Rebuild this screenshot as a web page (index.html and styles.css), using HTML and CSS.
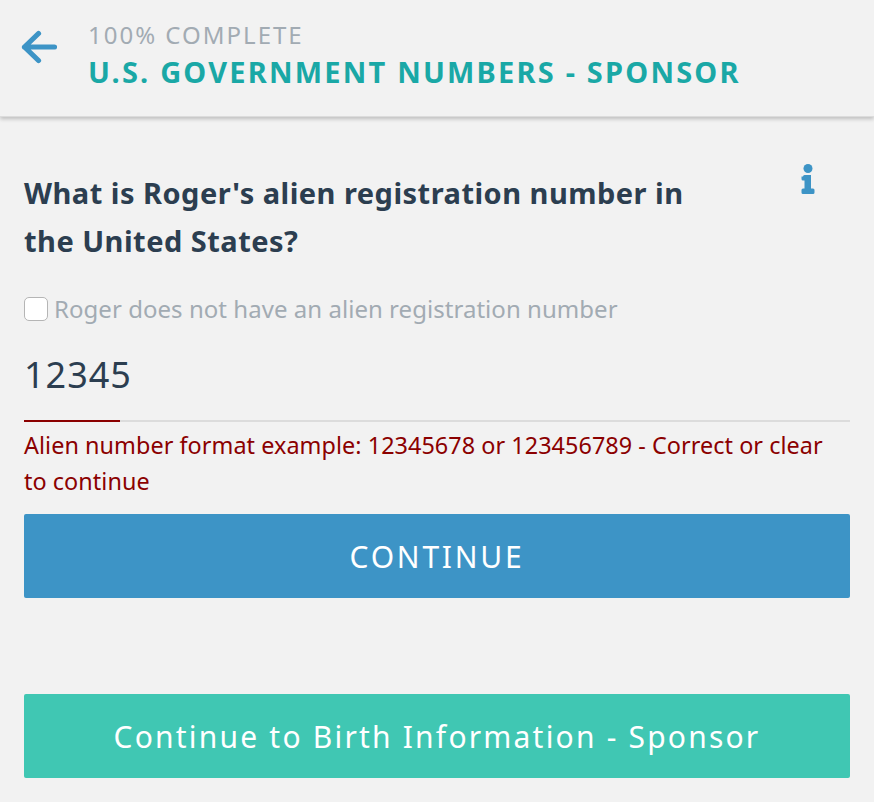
FILE: index.html
```html
<!DOCTYPE html>
<html lang="en">
<head>
<meta charset="utf-8">
<title>U.S. Government Numbers - Sponsor</title>
<link rel="stylesheet" href="styles.css">
</head>
<body>
<header class="top">
  <svg class="back" width="36" height="34" viewBox="0 0 36 34" aria-hidden="true"><path d="M33.500 17H3.500M17.500 3.500 3.500 17l14 13.500" fill="none" stroke="#3d94c6" stroke-width="5.200" stroke-linecap="round" stroke-linejoin="round"/></svg>
  <div class="titles">
    <div class="progress">100% COMPLETE</div>
    <div class="section">U.S. GOVERNMENT NUMBERS - SPONSOR</div>
  </div>
</header>
<main class="main">
  <div class="question-row">
    <h1 class="question">What is Roger's alien registration number in the United States?</h1>
    <svg class="info" width="14" height="32" viewBox="0 0 14 32" aria-hidden="true"><circle cx="7" cy="4.500" r="4.500" fill="#3d94c6"/><path d="M2 12.500Q2 11 3.500 11H10V24.500H12Q13.500 24.500 13.500 26V28.500Q13.500 30 12 30H2Q.5 30 .5 28.500V26Q.5 24.500 2 24.500H3.500V16.500H2Q.5 16.500 .5 15V12.500Z" fill="#3d94c6"/></svg>
  </div>
  <label class="check-row"><input class="check" type="checkbox"><span>Roger does not have an alien registration number</span></label>
  <div class="value">12345</div>
  <div class="rule"><div class="rule-fill"></div></div>
  <p class="error">Alien number format example: 12345678 or 123456789 - Correct or clear to continue</p>
  <button class="btn btn-blue" type="button">CONTINUE</button>
  <button class="btn btn-green" type="button">Continue to Birth Information - Sponsor</button>
</main>
</body>
</html>
```
FILE: styles.css
```css
* { box-sizing: border-box; }
html, body { margin: 0; padding: 0; }
body {
  width: 874px;
  height: 802px;
  overflow: hidden;
  background: #f2f2f2;
  font-family: "Noto Sans", "Open Sans", sans-serif;
}
.top {
  height: 117px;
  display: flex;
  align-items: flex-start;
  padding: 21px 0 0 21px;
  box-shadow: 0 2px 4px rgba(0,0,0,.22);
  border-bottom: 1px solid #dcdcdc;
}
.back { margin-top: 9px; flex: none; }
.titles { margin-left: 31px; }
.progress {
  font-size: 24px;
  line-height: 30px;
  letter-spacing: 2px;
  color: #a2abb3;
  margin-top: -1px;
}
.section {
  margin-top: 6px;
  font-size: 29px;
  line-height: 32px;
  font-weight: 700;
  letter-spacing: 2.2px;
  color: #1aa8a6;
}
.main { padding: 52px 24px 0; }
.question-row { display: flex; justify-content: space-between; align-items: flex-start; }
.question {
  margin: 0;
  width: 670px;
  font-size: 29px;
  line-height: 48px;
  font-weight: 700;
  letter-spacing: .48px;
  color: #2c3e50;
}
.info { margin: -5px 35px 0 0; flex: none; }
.check-row {
  display: flex;
  align-items: center;
  margin-top: 24px;
  height: 38px;
  font-size: 24px;
  letter-spacing: .04px;
  color: #a2abb3;
}
.check {
  appearance: none;
  width: 24px;
  height: 24px;
  margin: 1px 6px 0 0;
  background: #fff;
  border: 1px solid #b5b5b5;
  border-radius: 5px;
}
.value {
  margin-top: 26px;
  font-size: 36px;
  line-height: 44px;
  letter-spacing: 1px;
  color: #2c3e50;
}
.rule {
  margin-top: 23px;
  height: 2px;
  background: #dcdcdc;
}
.rule-fill { width: 96px; height: 2px; background: #8b0000; }
.error {
  margin: 5px 0 0;
  max-width: 812px;
  font-size: 23.4px;
  line-height: 36px;
  letter-spacing: .05px;
  color: #8b0000;
}
.btn {
  display: block;
  width: 100%;
  height: 84px;
  border: 0;
  border-radius: 2px;
  color: #fff;
  font-family: inherit;
  font-size: 30px;
}
.btn-blue { margin-top: 15px; background: #3d94c6; letter-spacing: 2.75px; }
.btn-green { margin-top: 96px; background: #40c7b3; letter-spacing: 2.2px; }
```
